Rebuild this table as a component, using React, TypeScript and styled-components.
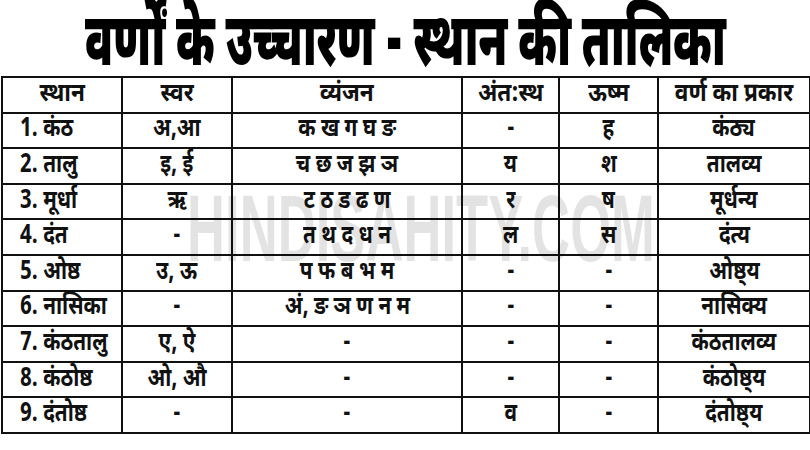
import React from "react";
import styled, { createGlobalStyle } from "styled-components";

const GlobalStyle = createGlobalStyle`
  html, body {
    margin: 0;
    padding: 0;
    background: #ffffff;
  }
  body {
    width: 810px;
    height: 450px;
    overflow: hidden;
    font-family: "Noto Sans Devanagari", "Lohit Devanagari", "FreeSans", "Noto Sans", sans-serif;
  }
`;

type Row = string[];

const header: Row = ["स्थान", "स्वर", "व्यंजन", "अंत:स्थ", "ऊष्म", "वर्ण का प्रकार"];

const rows: Row[] = [
  ["1. कंठ", "अ,आ", "क ख ग घ ङ", "-", "ह", "कंठ्य"],
  ["2. तालु", "इ, ई", "च छ ज झ ञ", "य", "श", "तालव्य"],
  ["3. मूर्धा", "ऋ", "ट ठ ड ढ ण", "र", "ष", "मूर्धन्य"],
  ["4. दंत", "-", "त थ द ध न", "ल", "स", "दंत्य"],
  ["5. ओष्ठ", "उ, ऊ", "प फ ब भ म", "-", "-", "ओष्ठ्य"],
  ["6. नासिका", "-", "अं, ङ ञ ण न म", "-", "-", "नासिक्य"],
  ["7. कंठतालु", "ए, ऐ", "-", "-", "-", "कंठतालव्य"],
  ["8. कंठोष्ठ", "ओ, औ", "-", "-", "-", "कंठोष्ठ्य"],
  ["9. दंतोष्ठ", "-", "-", "व", "-", "दंतोष्ठ्य"],
];

const widths = [120, 110, 230, 97, 99, 152];

const Page = styled.div`
  width: 810px;
  height: 450px;
  display: flex;
  flex-direction: column;
  align-items: center;
  position: relative;
  overflow: hidden;
`;

const Title = styled.h1`
  margin: 0;
  height: 76px;
  width: 100%;
  display: flex;
  align-items: center;
  justify-content: center;
  font-size: 48px;
  font-weight: 900;
  color: #000;
  line-height: 1;
  letter-spacing: -0.5px;
`;

const TitleText = styled.span`
  display: inline-block;
  white-space: nowrap;
  transform: translateY(10px) scale(0.93, 1.55);
`;

const Condensed = styled.span<{ $squeeze: number; $left?: boolean }>`
  display: inline-block;
  transform: scaleX(${(p) => p.$squeeze});
  transform-origin: ${(p) => (p.$left ? "left center" : "center")};
  white-space: nowrap;
`;

const Table = styled.table`
  border-collapse: collapse;
  table-layout: fixed;
  width: 808px;
  margin-left: 1px;
  align-self: flex-start;
  position: relative;
  z-index: 1;
`;

const Cell = styled.td<{ $left?: boolean }>`
  border: 2px solid #111;
  height: 33.6px;
  padding: 0;
  padding-left: ${(p) => (p.$left ? "17px" : "0")};
  text-align: ${(p) => (p.$left ? "left" : "center")};
  font-size: 26px;
  font-weight: 700;
  color: #111;
  line-height: 1;
  white-space: nowrap;
  overflow: hidden;
`;

const HeadCell = styled(Cell).attrs({ as: "th" })``;

const Watermark = styled.div`
  position: absolute;
  left: 187px;
  top: 182px;
  font-family: "Liberation Sans", "Arial", sans-serif;
  font-weight: 700;
  font-size: 94px;
  color: rgba(0, 0, 0, 0.11);
  line-height: 1;
  white-space: nowrap;
  transform: scaleX(0.56);
  transform-origin: left top;
  pointer-events: none;
  z-index: 2;
`;

export default function App() {
  return (
    <Page>
      <GlobalStyle />
      <Title>
        <TitleText>वर्णों के उच्चारण - स्थान की तालिका</TitleText>
      </Title>
      <Table>
        <colgroup>
          {widths.map((w, i) => (
            <col key={i} style={{ width: w }} />
          ))}
        </colgroup>
        <thead>
          <tr>
            {header.map((h) => (
              <HeadCell key={h}>
                <Condensed $squeeze={0.87}>{h}</Condensed>
              </HeadCell>
            ))}
          </tr>
        </thead>
        <tbody>
          {rows.map((r, i) => (
            <tr key={i}>
              {r.map((c, j) => (
                <Cell key={j} $left={j === 0}>
                  <Condensed $squeeze={0.8} $left={j === 0}>
                    {c}
                  </Condensed>
                </Cell>
              ))}
            </tr>
          ))}
        </tbody>
      </Table>
      <Watermark>HINDISAHITY.COM</Watermark>
    </Page>
  );
}
